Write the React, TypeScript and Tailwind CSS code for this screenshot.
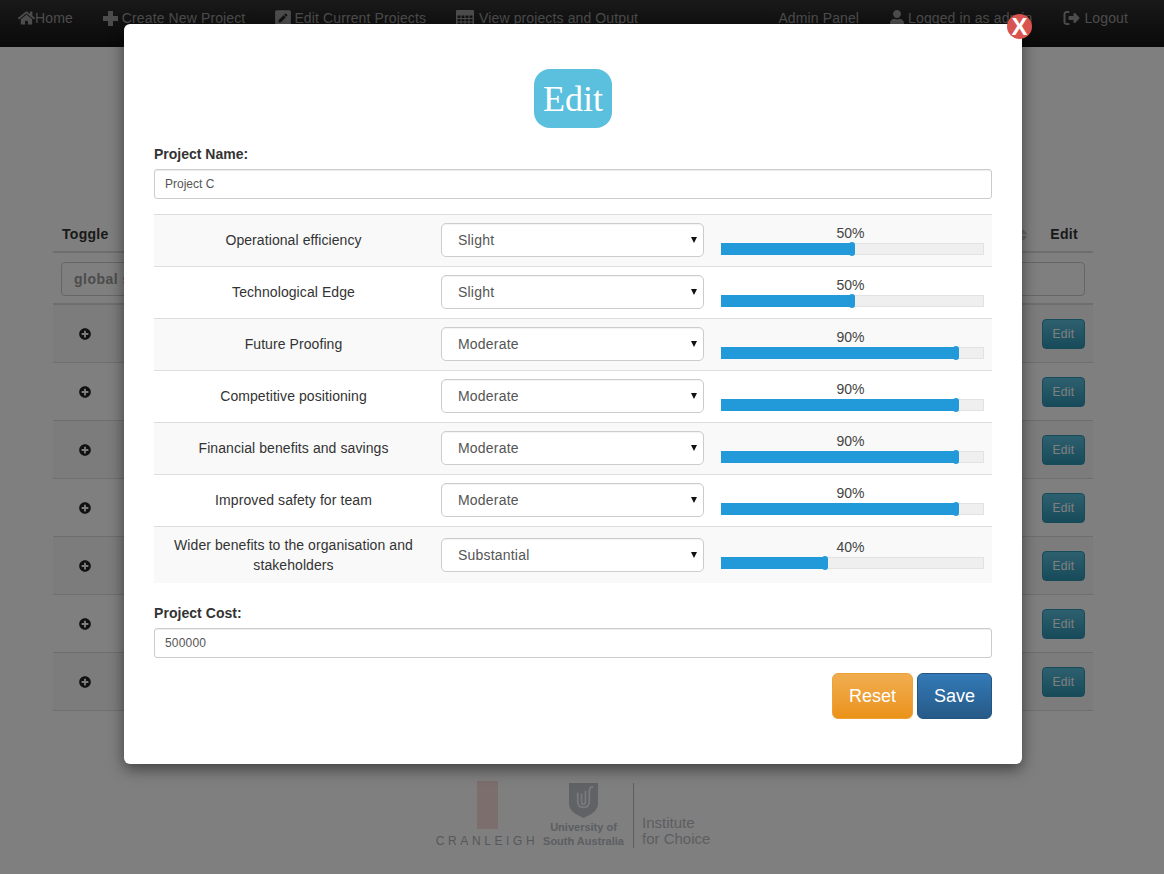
import { FaHome, FaUser, FaPlusCircle, FaPenSquare, FaSort } from "react-icons/fa";
import { FaRightFromBracket } from "react-icons/fa6";

function PlusIcon() {
  return (
    <svg width="15" height="15" viewBox="0 0 15 15" fill="currentColor">
      <path d="M5 0h5v5h5v5h-5v5H5v-5H0V5h5z" />
    </svg>
  );
}

function GridIcon() {
  return (
    <svg width="18" height="17" viewBox="0 0 18 17" fill="currentColor">
      <path
        fillRule="evenodd"
        d="M1 0h16a1 1 0 0 1 1 1v15a1 1 0 0 1-1 1H1a1 1 0 0 1-1-1V1a1 1 0 0 1 1-1zM1.500 5.500v2.500h3v-2.500zM5.500 5.500v2.500h3v-2.500zM9.500 5.500v2.500h3v-2.500zM13.500 5.500v2.500h3v-2.500zM1.500 9v2.500h3V9zM5.500 9v2.500h3V9zM9.500 9v2.500h3V9zM13.500 9v2.500h3V9zM1.500 12.500V15h3v-2.500zM5.500 12.500V15h3v-2.500zM9.500 12.500V15h3v-2.500zM13.500 12.500V15h3v-2.500z"
      />
    </svg>
  );
}

const navLeft = [
  { label: "Home", icon: <FaHome className="text-[18px] w-[17px]" />, gap: "gap-0" },
  { label: "Create New Project", icon: <PlusIcon />, gap: "gap-1" },
  { label: "Edit Current Projects", icon: <FaPenSquare className="text-[18px] w-[16px]" />, gap: "gap-[3px]" },
  { label: "View projects and Output", icon: <GridIcon />, gap: "gap-[5px]" },
];

const criteria = [
  { name: "Operational efficiency", level: "Slight", pct: 50 },
  { name: "Technological Edge", level: "Slight", pct: 50 },
  { name: "Future Proofing", level: "Moderate", pct: 90 },
  { name: "Competitive positioning", level: "Moderate", pct: 90 },
  { name: "Financial benefits and savings", level: "Moderate", pct: 90 },
  { name: "Improved safety for team", level: "Moderate", pct: 90 },
  { name: "Wider benefits to the organisation and stakeholders", level: "Substantial", pct: 40 },
];

function Slider({ pct }: { pct: number }) {
  return (
    <div className="w-[263px] ml-px">
      <div className="text-center text-[14px] leading-[18px] text-[#444] -translate-x-[2px] -translate-y-px">
        {pct}%
      </div>
      <div className="relative h-[12px] bg-[#efefef] border border-[#e2e2e2]">
        <div className="absolute -left-px -top-px -bottom-px bg-[#2299d8]" style={{ width: `${pct}%` }} />
        <div
          className="absolute -top-[2px] h-[14px] w-[6px] rounded-[3px] bg-[#2299d8]"
          style={{ left: `calc(${pct}% - 4px)` }}
        />
      </div>
    </div>
  );
}

function Row({ c, i }: { c: (typeof criteria)[number]; i: number }) {
  const last = i === criteria.length - 1;
  return (
    <div
      className={`flex items-center border-t border-[#dddddd] ${i % 2 === 0 ? "bg-[#f9f9f9]" : "bg-white"} ${
        last ? "h-[57px]" : "h-[52px] pb-[1px]"
      }`}
    >
      <div className="w-[279px] shrink-0 px-4 text-center text-[14px] leading-[20px] tracking-[0.08px] text-[#333]">
        {c.name}
      </div>
      <div className="relative ml-[8px] w-[263px] shrink-0">
        <select
          defaultValue={c.level}
          className="block h-[34px] w-full appearance-none rounded-[5px] border border-[#cccccc] bg-white pl-4 text-[14px] tracking-[0.2px] text-[#555] shadow-[inset_0_1px_1px_rgba(0,0,0,0.05)]"
        >
          <option>Slight</option>
          <option>Moderate</option>
          <option>Substantial</option>
        </select>
        <svg className="pointer-events-none absolute right-[7px] top-[14px]" width="6" height="6" viewBox="0 0 6 6">
          <path d="M0 0h6L3 6z" fill="#111" />
        </svg>
      </div>
      <div className={`ml-[16px] shrink-0 ${last ? "-translate-y-px" : ""}`}>
        <Slider pct={c.pct} />
      </div>
    </div>
  );
}

function Modal() {
  return (
    <div className="absolute left-[124px] top-[24px] h-[740px] w-[898px] rounded-[6px] bg-white px-[30px] pt-[45px] shadow-[0_5px_15px_rgba(0,0,0,0.5)] font-['Liberation_Sans',sans-serif]">
      <div className="absolute -right-[10px] -top-[10px] flex h-[25px] w-[25px] items-center justify-center rounded-full bg-[#d9534f] text-[24px] leading-none font-bold text-white">
        X
      </div>
      <div className="mx-auto flex h-[59px] w-[78px] items-center justify-center rounded-[16px] bg-[#5bc0de] font-['Liberation_Serif',serif] text-[36px] text-white">
        Edit
      </div>
      <label className="mt-[17px] block text-[14px] leading-[18px] font-bold text-[#333]">Project Name:</label>
      <input
        defaultValue="Project C"
        className="mt-[6px] block h-[30px] w-full rounded-[3px] border border-[#cccccc] px-[10px] text-[12px] text-[#555] shadow-[inset_0_1px_1px_rgba(0,0,0,0.075)]"
      />
      <div className="mt-[15px]">
        {criteria.map((c, i) => (
          <Row key={c.name} c={c} i={i} />
        ))}
      </div>
      <label className="mt-[21px] block text-[14px] leading-[18px] font-bold tracking-[0.05px] text-[#333]">
        Project Cost:
      </label>
      <input
        defaultValue="500000"
        className="mt-[6px] block h-[30px] w-full rounded-[3px] border border-[#cccccc] px-[10px] text-[12px] tracking-[0.2px] text-[#555] shadow-[inset_0_1px_1px_rgba(0,0,0,0.075)]"
      />
      <div className="mt-[15px] flex justify-end gap-[4px]">
        <button className="h-[46px] w-[81px] rounded-[6px] border border-[#eea236] bg-gradient-to-b from-[#f0ad4e] to-[#eb9316] text-[18px] text-white">
          Reset
        </button>
        <button className="h-[46px] w-[75px] rounded-[6px] border border-[#245580] bg-gradient-to-b from-[#337ab7] to-[#265a88] text-[18px] text-white">
          Save
        </button>
      </div>
    </div>
  );
}

function Shield() {
  return (
    <svg width="29" height="35" viewBox="0 0 30 36">
      <path d="M0 0h30v21c0 8-8 12-15 15C8 33 0 29 0 21z" fill="#c0c4cc" />
      <path
        d="M9 10v9c0 4 2 6 6 6s6-2 6-6V8c0-3 2-4 4-4M13 11v8c0 2 1 3 2 3s2-1 2-3V8"
        fill="none"
        stroke="#f4f4f6"
        strokeWidth="1.8"
      />
    </svg>
  );
}

export default function App() {
  return (
    <div className="relative h-[874px] w-[1164px] overflow-hidden bg-white font-['Liberation_Sans',sans-serif]">
      <nav className="flex h-[47px] justify-between bg-gradient-to-b from-[#333333] to-[#141414] pt-[8px] text-[14px] leading-[20px] tracking-[0.12px] text-[#999999]">
        <div className="flex gap-[30px] pl-[18px]">
          {navLeft.map((n) => (
            <div key={n.label} className={`flex h-[20px] items-center ${n.gap}`}>
              {n.icon}
              <span>{n.label}</span>
            </div>
          ))}
        </div>
        <div className="flex gap-[31px] pr-[36px]">
          <span>Admin Panel</span>
          <div className="flex h-[20px] items-center gap-1">
            <FaUser className="text-[16px] w-[14px]" />
            <span>Logged in as admin</span>
          </div>
          <div className="flex h-[20px] items-center gap-1">
            <FaRightFromBracket className="text-[16px] w-[17px]" />
            <span>Logout</span>
          </div>
        </div>
      </nav>

      <main className="ml-[53px] mt-[177px] w-[1040px] text-[14px] text-[#333]">
        <div className="flex h-[29px] items-start justify-between border-b-2 border-[#dddddd] px-[9px] font-bold tracking-[0.3px]">
          <span>Toggle</span>
          <div className="mr-[6px] flex items-center gap-[20px]">
            <FaSort className="text-[14px] text-[#cccccc]" />
            <span>Edit</span>
          </div>
        </div>
        <div className="h-[52px] border-b-2 border-[#dddddd] px-[8px] pt-[9px]">
          <input
            defaultValue="global search"
            className="h-[34px] w-full rounded-[4px] border border-[#cccccc] px-[12px] text-[14px] font-bold tracking-[0.5px] text-[#999]"
          />
        </div>
        {[0, 1, 2, 3, 4, 5, 6].map((i) => (
          <div
            key={i}
            className={`flex h-[58px] items-center justify-between border-b border-[#dddddd] pl-[26px] pr-[8px] ${
              i % 2 === 0 ? "bg-[#f9f9f9]" : "bg-white"
            }`}
          >
            <FaPlusCircle className="text-[12px] text-[#222]" />
            <button className="h-[30px] w-[43px] rounded-[4px] border border-[#2f96b4] bg-gradient-to-b from-[#5bc0de] to-[#2f96b4] text-[12px] tracking-[0.3px] text-white">
              Edit
            </button>
          </div>
        ))}
      </main>

      <footer className="mt-[70px] flex items-end gap-[5px] pl-[436px]">
        <div className="flex w-[102px] flex-col items-center">
          <div className="h-[48px] w-[21px] bg-[#f6dcda]" />
          <div className="mt-[5px] text-[12px] leading-[14px] tracking-[3.6px] whitespace-nowrap text-[#aeb0b6]">
            CRANLEIGH
          </div>
        </div>
        <div className="flex w-[81px] flex-col items-center">
          <Shield />
          <div className="mt-[2px] text-center text-[11px] leading-[14px] font-bold whitespace-nowrap text-[#b8bcc4]">
            University of
            <br />
            South Australia
          </div>
        </div>
        <div className="ml-[4px] h-[65px] border-l border-[#b8bcc4] pl-[8px] pt-[32px] text-[15px] leading-[16px] whitespace-nowrap text-[#b8bcc4]">
          Institute
          <br />
          for Choice
        </div>
      </footer>

      <div className="absolute inset-0 bg-black/50" />
      <Modal />
    </div>
  );
}
